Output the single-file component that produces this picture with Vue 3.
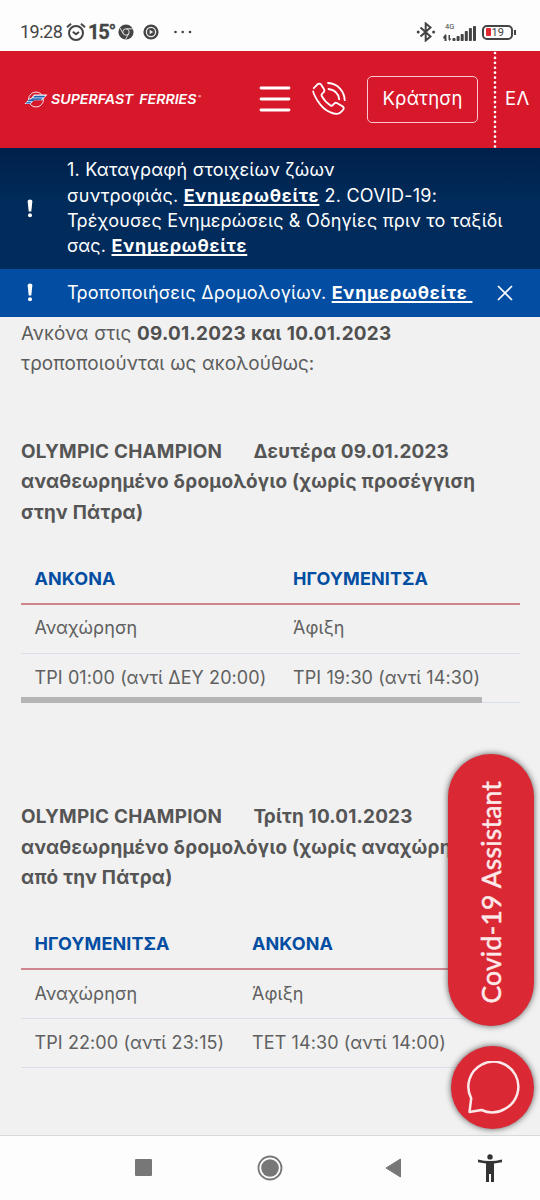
<script setup>
const schedules = [
  {
    day: 'Δευτέρα 09.01.2023',
    lines: ['αναθεωρημένο δρομολόγιο (χωρίς προσέγγιση', 'στην Πάτρα)'],
    head: ['ΑΝΚΟΝΑ', 'ΗΓΟΥΜΕΝΙΤΣΑ'],
    rows: [['Αναχώρηση', 'Άφιξη'], ['ΤΡΙ 01:00 (αντί ΔΕΥ 20:00)', 'ΤΡΙ 19:30 (αντί 14:30)']],
    scroll: true,
    variant: 'first',
  },
  {
    day: 'Τρίτη 10.01.2023',
    lines: ['αναθεωρημένο δρομολόγιο (χωρίς αναχώρηση', 'από την Πάτρα)'],
    head: ['ΗΓΟΥΜΕΝΙΤΣΑ', 'ΑΝΚΟΝΑ'],
    rows: [['Αναχώρηση', 'Άφιξη'], ['ΤΡΙ 22:00 (αντί 23:15)', 'ΤΕΤ 14:30 (αντί 14:00)']],
    scroll: false,
    variant: 'second',
  },
]
const signal = [3, 5, 7, 10, 13, 15]
</script>

<template>
  <div class="screen">
    <div class="status">
      <span class="time">19:28</span>
      <svg class="alarm" width="20" height="20" viewBox="0 0 20 20" fill="none" stroke="#444" stroke-width="2">
        <circle cx="10" cy="11" r="7" />
        <path d="M1 5.2 5 1.8M19 5.2 15 1.8M6.8 9.8 10 12.3l3-2.3" />
      </svg>
      <span class="temp">15°</span>
      <svg class="chrome" width="16" height="16" viewBox="0 0 16 16">
        <circle cx="8" cy="8" r="7.6" fill="#444" />
        <g fill="none" stroke="#ddd" stroke-width="1"><circle cx="8" cy="8" r="3.2" /><path d="M8 4.8h7M5.2 9.6 2 4M10.8 9.6 7.5 15.2" /></g>
      </svg>
      <svg class="play" width="16" height="16" viewBox="0 0 16 16">
        <circle cx="8" cy="8" r="7.6" fill="#444" />
        <circle cx="8" cy="8" r="4.6" fill="none" stroke="#eee" stroke-width="1.3" />
        <path d="M6.6 5.7v4.6L10.3 8z" fill="#eee" />
      </svg>
      <svg class="dots" width="20" height="4" viewBox="0 0 20 4" fill="#444"><circle cx="2.5" cy="2" r="1.3" /><circle cx="9.7" cy="2" r="1.3" /><circle cx="17" cy="2" r="1.3" /></svg>
      <svg class="bt" width="20" height="20" viewBox="0 0 20 20" fill="none" stroke="#444" stroke-width="2">
        <path d="M4.5 5.5 14.5 14.5 9.7 18.5V1.5L14.5 5.5 4.5 14.5" />
        <g fill="#444" stroke="none"><circle cx="2.2" cy="10" r="1.5" /><circle cx="17.6" cy="10" r="1.5" /></g>
      </svg>
      <div class="cell">
        <span class="gen">4G</span>
        <svg width="34" height="16" viewBox="0 0 34 16">
          <path d="M0 13.5h1.5V16h2v-5.5L2.5 9 .5 11.5M5.5 10v4.5L6.5 16l2-2.5H7V10z" fill="#444" />
          <rect v-for="(h, i) in signal" :key="i" :x="9.5 + i * 4.1" :y="16 - h" width="3" :height="h" rx=".8" fill="#444" />
        </svg>
      </div>
      <div class="battery"><i class="charge"></i><span>19</span></div>
      <i class="tip"></i>
    </div>

    <header class="header">
      <svg class="logo-mark" width="25" height="17" viewBox="0 0 25 17">
        <circle cx="12" cy="8.5" r="7.5" fill="none" stroke="#f7dfe3" stroke-width="1" />
        <path d="M10 3.5h13.5L18 9.200h-8L6.500 13H.5l5.200-5.700h1.300z" fill="#f5f5fa" />
        <path d="M10.5 5h10.300l-1.200 1.300H9.500zM8 7.600h10l-1 1.200H7zM5 8.800h5l-1 1.200H4zM3 11.200h4l-.8 1h-4z" fill="#1f64b4" stroke="#1f64b4" stroke-width=".5" />
      </svg>
      <span class="brand"><span class="word">SUPERFAST FERRIES</span><sup>®</sup></span>
      <svg class="burger" width="32" height="26" viewBox="0 0 32 26" stroke="#fff" stroke-width="2.8" stroke-linecap="round"><path d="M2 2h28M2 13h28M2 24h28" /></svg>
      <svg class="phone" width="34" height="34" viewBox="0 0 34 34" fill="none" stroke="#fff" stroke-width="1.8" stroke-linecap="round" stroke-linejoin="round">
        <path d="M1.8 6.2 5.5 2.3q1.8-1.5 3.5.2l3.2 5q.6 1.8-.8 3l-1.6 1.7q-.6.8 0 2 3 5.7 8.7 9.2 1.3.8 2.2-.2l1.8-1.9q1.3-1 2.8-.1l5.5 3.3q1.7 1.6.3 3.3l-3 3q-3.5 2.5-9.6-.4Q11 27.5 5.4 18.5 1.5 12 1.2 9.5M16 1q7.5.4 12 5.6 4.5 5 4.7 11.6M16.5 7q9.5 1.2 10.7 10.3" />
      </svg>
      <button class="book">Κράτηση</button>
      <svg class="divider" width="4" height="97" viewBox="0 0 4 97"><path d="M2 2v96" stroke="#fff" stroke-width="2.7" stroke-linecap="round" stroke-dasharray="0 4.92" /></svg>
      <span class="lang">ΕΛ</span>
    </header>

    <section class="alert dark">
      <svg class="bang" width="6" height="19" viewBox="0 0 6 19" fill="#fff"><path d="M.6 2Q.8.5 3 .5T5.4 2L4.3 12.5H1.7z" /><circle cx="3" cy="16.3" r="2" /></svg>
      <p>1. Καταγραφή στοιχείων ζώων<br>συντροφιάς. <b>Ενημερωθείτε</b> 2. COVID-19:<br>Τρέχουσες Ενημερώσεις &amp; Οδηγίες πριν το ταξίδι<br>σας. <b>Ενημερωθείτε</b></p>
    </section>
    <section class="alert blue">
      <svg class="bang" width="6" height="19" viewBox="0 0 6 19" fill="#fff"><path d="M.6 2Q.8.5 3 .5T5.4 2L4.3 12.5H1.7z" /><circle cx="3" cy="16.3" r="2" /></svg>
      <p>Τροποποιήσεις Δρομολογίων. <b>Ενημερωθείτε&nbsp;</b></p>
      <svg class="close" width="16" height="16" viewBox="0 0 16 16" stroke="#fff" stroke-width="1.7"><path d="M1 1l14 14M15 1 1 15" /></svg>
    </section>

    <main class="content">
      <p class="intro">Ανκόνα στις <b>09.01.2023 και 10.01.2023</b><br>τροποποιούνται ως ακολούθως:</p>
      <article v-for="s in schedules" :key="s.variant" :class="s.variant">
        <h2><span class="ship">OLYMPIC CHAMPION</span><span class="day">{{ s.day }}</span><template v-for="l in s.lines" :key="l"><br>{{ l }}</template></h2>
        <div class="table">
          <div class="row head"><span v-for="c in s.head" :key="c">{{ c }}</span></div>
          <div v-for="r in s.rows" :key="r[0]" class="row"><span v-for="c in r" :key="c">{{ c }}</span></div>
          <i v-if="s.scroll" class="scroll"></i>
        </div>
      </article>
    </main>

    <nav class="nav">
      <svg class="recent" width="17" height="17"><rect width="17" height="17" rx="1" fill="#777" /></svg>
      <svg class="home" width="26" height="26" viewBox="0 0 26 26"><circle cx="13" cy="13" r="11.5" fill="none" stroke="#777" stroke-width="1.8" /><circle cx="13" cy="13" r="8.8" fill="#777" /></svg>
      <svg class="back" width="17" height="20" viewBox="0 0 17 20"><path d="M15.5 1v18L1 10z" fill="#777" stroke="#777" stroke-linejoin="round" /></svg>
      <svg class="access" width="26" height="28" viewBox="0 0 26 28" fill="#333"><circle cx="13" cy="2.9" r="2.7" /><path d="M1 5.5q12 3 24 0v2.7l-8 1.3V28h-3v-8h-2v8H9V9.5L1 8.2z" /></svg>
    </nav>

    <div class="assistant"><span>Covid-19 Assistant</span></div>
    <div class="chat">
      <svg width="54" height="54" viewBox="0 0 54 54" fill="none" stroke="#fbe9ea" stroke-width="2.5" stroke-linejoin="round"><path d="M15.500 49q12 5.500 23.500-1.200a25 25 0 1 0-33.800-10.500L3.500 51z" /></svg>
    </div>
  </div>
</template>

<style>
html, body { margin: 0; background: #f1f1f1; }
</style>

<style scoped>
.screen { position: relative; display: flex; flex-direction: column; width: 540px; height: 1200px; overflow: hidden; background: #f1f1f1; font-family: Inter, "Noto Sans", sans-serif; color: #555; }
.status { box-sizing: border-box; flex: none; height: 51px; padding: 13px 24px 0 20px; background: #fdfdfd; display: flex; align-items: center; color: #444; }
.time { font: 18px/20px Roboto, sans-serif; width: 46px; white-space: nowrap; letter-spacing: -.5px; }
.temp { font: 700 20px/20px Roboto, sans-serif; width: 27px; margin-left: 2px; letter-spacing: -1.2px; -webkit-text-stroke: .3px #444; }
.chrome { margin-left: 3px; }
.play { margin-left: 9px; }
.dots { margin-left: 14px; }
.bt { margin-left: auto; margin-right: 7px; }
.cell { width: 34px; height: 18px; position: relative; display: flex; align-items: flex-end; }
.gen { position: absolute; left: 2px; top: 0; font: 7.5px/8px Roboto, sans-serif; }
.battery { box-sizing: border-box; margin-left: 5px; width: 31px; height: 15px; border: 2px solid #444; border-radius: 5px; display: flex; align-items: center; gap: 1px; padding-left: 1.5px; font: 11px/11px Roboto, sans-serif; }
.charge { width: 5px; height: 8px; background: #e22732; border-radius: 1px; }
.tip { width: 2px; height: 5px; background: #444; margin-left: 1px; }
.header { box-sizing: border-box; flex: none; height: 97px; padding-bottom: 1px; background: #d7182a; display: flex; align-items: center; padding-left: 24px; color: #fff; }
.logo-mark { flex: none; }
.brand { position: relative; width: 151px; margin-left: 2px; margin-top: -1px; font: italic 600 13.2px/18px Inter, sans-serif; white-space: nowrap; }
.word { display: inline-block; transform: scaleX(1.075); transform-origin: left; word-spacing: 2px; }
.brand sup { position: absolute; top: -2px; right: 1px; font-size: 4px; }
.burger { flex: none; margin-left: 57px; margin-top: -1px; }
.phone { flex: none; margin-left: 21px; margin-top: -1px; }
.book { box-sizing: border-box; width: 111px; height: 47px; flex: none; margin-left: 21px; padding: 0 0 2px; border: 1.5px solid #f8c9ce; border-radius: 5px; background: none; color: #fff; font: 400 18.5px/24px Inter, sans-serif; letter-spacing: .2px; }
.divider { flex: none; margin-left: 15px; align-self: flex-start; }
.lang { margin-left: 8px; margin-top: -2px; font: 400 18.5px/24px Inter, sans-serif; letter-spacing: .3px; }
.alert { box-sizing: border-box; flex: none; display: flex; align-items: center; padding-left: 27px; color: #fff; font-size: 18px; line-height: 25.4px; font-weight: 400; letter-spacing: .24px; white-space: nowrap; }
.alert p { margin: -1px 0 0 34px; }
.alert b { font-weight: 700; letter-spacing: .73px; text-decoration: underline; text-decoration-skip-ink: none; text-decoration-thickness: 1.5px; text-underline-offset: 2px; }
.dark { height: 121px; background: linear-gradient(#00204a, #002b5b 45%); }
.dark p { word-spacing: -.1px; }
.blue { height: 48px; background: #034ea2; }
.blue p { margin-top: 0; }
.bang { margin-top: -1px; }
.close { margin-left: auto; margin-right: 27px; }
.content { flex: 1; min-height: 0; padding: 2px 20px 0 21px; font-size: 18.9px; line-height: 30.4px; }
.intro { margin: 0; font-weight: 400; color: #5c5c5c; letter-spacing: .08px; word-spacing: .3px; }
.intro b { color: #505050; }
.intro b, h2 { font-weight: 700; letter-spacing: .27px; }
h2 { margin: 0; font-size: 18.9px; white-space: nowrap; }
.ship { display: inline-block; width: 232.5px; letter-spacing: .24px; }
.day { letter-spacing: .2px; }
.first { margin-top: 57px; }
.second { margin-top: 99px; }
.table { position: relative; margin-top: 25px; }
.row { box-sizing: border-box; display: grid; grid-template-columns: 258.5px 1fr; height: 49.3px; align-items: center; padding-left: 13.5px; border-bottom: 1px solid #d9dfe8; font-size: 18px; font-weight: 400; color: #606060; letter-spacing: .1px; white-space: nowrap; }
.second .row { grid-template-columns: 217.5px 1fr; }
.row.head { height: 51.5px; padding-top: 2px; border-bottom: 2px solid #cf858e; color: #034ea2; font-weight: 700; }
.scroll { position: absolute; left: 0; bottom: 0; width: 461px; height: 6px; background: #b5b5b5; }
.nav { box-sizing: border-box; flex: none; height: 65px; background: #fdfdfd; border-top: 1px solid #d9d9d9; display: flex; align-items: center; padding: 0 0 1px 135px; }
.home { margin-left: 105px; }
.back { margin-left: 102px; }
.access { margin-left: 75px; }
.assistant { position: absolute; left: 448px; top: 754px; width: 86px; height: 272px; border-radius: 43px; background: #da2834; box-shadow: 0 0 6px #555; color: #fde9e9; display: flex; align-items: center; justify-content: center; }
.assistant span { writing-mode: vertical-rl; transform: rotate(180deg); margin-top: 4px; font: 400 26.5px/32px Lato, sans-serif; letter-spacing: .2px; white-space: nowrap; -webkit-text-stroke: .5px #fde9e9; }
.chat { position: absolute; left: 451px; top: 1046px; width: 83px; height: 83px; border-radius: 50%; background: #da2834; box-shadow: 0 0 6px #555; display: flex; align-items: center; justify-content: center; }
</style>
